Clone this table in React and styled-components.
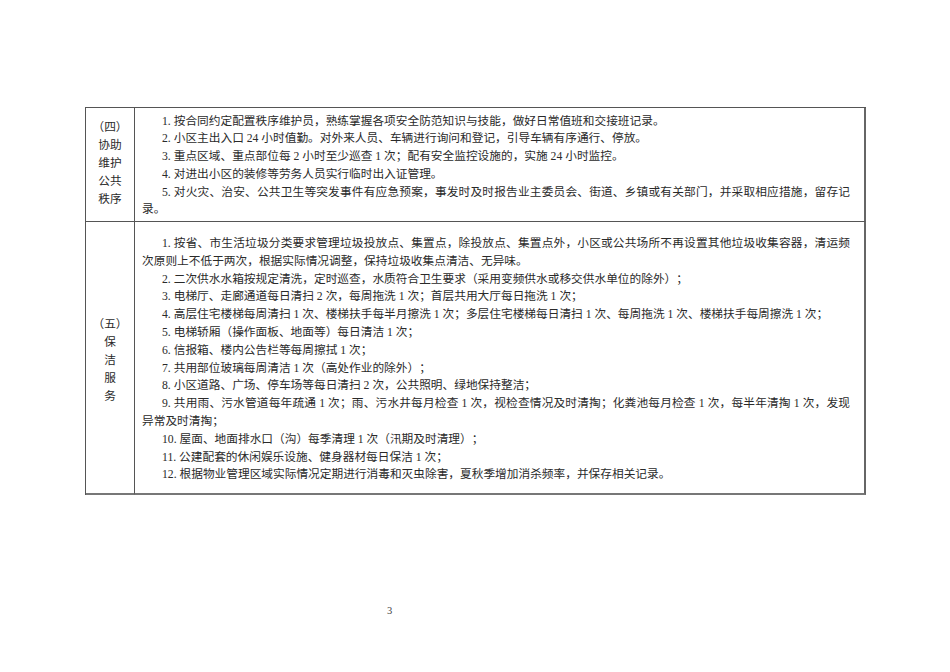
import React from "react";
import styled, { createGlobalStyle } from "styled-components";

const GlobalStyle = createGlobalStyle`
  html, body {
    margin: 0;
    padding: 0;
    background: #ffffff;
  }
  body {
    font-family: "Liberation Serif", "Noto Sans CJK SC", serif;
    color: #2a2a2a;
    text-spacing-trim: space-all;
  }
`;

const orderRows = [
  { text: "1. 按合同约定配置秩序维护员，熟练掌握各项安全防范知识与技能，做好日常值班和交接班记录。" },
  { text: "2. 小区主出入口 24 小时值勤。对外来人员、车辆进行询问和登记，引导车辆有序通行、停放。" },
  { text: "3. 重点区域、重点部位每 2 小时至少巡查 1 次；配有安全监控设施的，实施 24 小时监控。" },
  { text: "4. 对进出小区的装修等劳务人员实行临时出入证管理。" },
  {
    text: "5. 对火灾、治安、公共卫生等突发事件有应急预案，事发时及时报告业主委员会、街道、乡镇或有关部门，并采取相应措施，留存记",
    rest: "录。",
  },
];

const cleanRows = [
  {
    text: "1. 按省、市生活垃圾分类要求管理垃圾投放点、集置点，除投放点、集置点外，小区或公共场所不再设置其他垃圾收集容器，清运频",
    rest: "次原则上不低于两次，根据实际情况调整，保持垃圾收集点清洁、无异味。",
  },
  { text: "2. 二次供水水箱按规定清洗，定时巡查，水质符合卫生要求（采用变频供水或移交供水单位的除外）；" },
  { text: "3. 电梯厅、走廊通道每日清扫 2 次，每周拖洗 1 次；首层共用大厅每日拖洗 1 次；" },
  { text: "4. 高层住宅楼梯每周清扫 1 次、楼梯扶手每半月擦洗 1 次；多层住宅楼梯每日清扫 1 次、每周拖洗 1 次、楼梯扶手每周擦洗 1 次；" },
  { text: "5. 电梯轿厢（操作面板、地面等）每日清洁 1 次；" },
  { text: "6. 信报箱、楼内公告栏等每周擦拭 1 次；" },
  { text: "7. 共用部位玻璃每周清洁 1 次（高处作业的除外）；" },
  { text: "8. 小区道路、广场、停车场等每日清扫 2 次，公共照明、绿地保持整洁；" },
  {
    text: "9. 共用雨、污水管道每年疏通 1 次；雨、污水井每月检查 1 次，视检查情况及时清掏；化粪池每月检查 1 次，每半年清掏 1 次，发现",
    rest: "异常及时清掏；",
  },
  { text: "10. 屋面、地面排水口（沟）每季清理 1 次（汛期及时清理）；" },
  { text: "11. 公建配套的休闲娱乐设施、健身器材每日保洁 1 次；" },
  { text: "12. 根据物业管理区域实际情况定期进行消毒和灭虫除害，夏秋季增加消杀频率，并保存相关记录。" },
];

const Page = styled.div`
  padding: 107px 0 0 85px;
  min-height: 672px;
  box-sizing: border-box;
`;

const Table = styled.div`
  display: grid;
  grid-template-columns: 49px 731px;
  width: 781px;
  box-sizing: border-box;
  border-top: 1px solid #555;
  border-left: 1px solid #555;
`;

const Label = styled.div`
  display: flex;
  flex-direction: column;
  align-items: center;
  justify-content: center;
  box-sizing: border-box;
  border-right: 1px solid #555;
  border-bottom: ${(p) => (p.$last ? "2px solid #777" : "1px solid #555")};
  padding-top: ${(p) => p.$shift || 0}px;
  font-size: 11.7px;
  line-height: 18px;
  text-align: center;
`;

const Body = styled.div`
  box-sizing: border-box;
  padding: ${(p) => p.$pad};
  border-right: 2px solid #666;
  border-bottom: ${(p) => (p.$last ? "2px solid #777" : "1px solid #555")};
  font-size: 11.7px;
  line-height: 17.8px;
`;

const Para = styled.div`
  text-indent: ${(p) => (p.$cont ? 0 : 20)}px;
  text-align: justify;
  text-align-last: ${(p) => (p.$full ? "justify" : "auto")};
  white-space: ${(p) => (p.$full ? "nowrap" : "normal")};
`;

const PageNumber = styled.div`
  margin: 110px 0 0 302px;
  font-size: 10.5px;
  line-height: 12px;
  color: #444;
`;

const Items = ({ rows }) =>
  rows.map((r, i) => (
    <React.Fragment key={i}>
      <Para $full={!!r.rest}>{r.text}</Para>
      {r.rest && <Para $cont>{r.rest}</Para>}
    </React.Fragment>
  ));

const App = () => (
  <Page>
    <GlobalStyle />
    <Table>
      <Label>
        <div>（四）</div>
        <div>协助</div>
        <div>维护</div>
        <div>公共</div>
        <div>秩序</div>
      </Label>
      <Body $pad="4.5px 14px 1.7px 7px">
        <Items rows={orderRows} />
      </Body>
      <Label $last $shift={8}>
        <div>（五）</div>
        <div>保</div>
        <div>洁</div>
        <div>服</div>
        <div>务</div>
      </Label>
      <Body $last $pad="13px 14px 8.8px 7px">
        <Items rows={cleanRows} />
      </Body>
    </Table>
    <PageNumber>3</PageNumber>
  </Page>
);

export default App;
